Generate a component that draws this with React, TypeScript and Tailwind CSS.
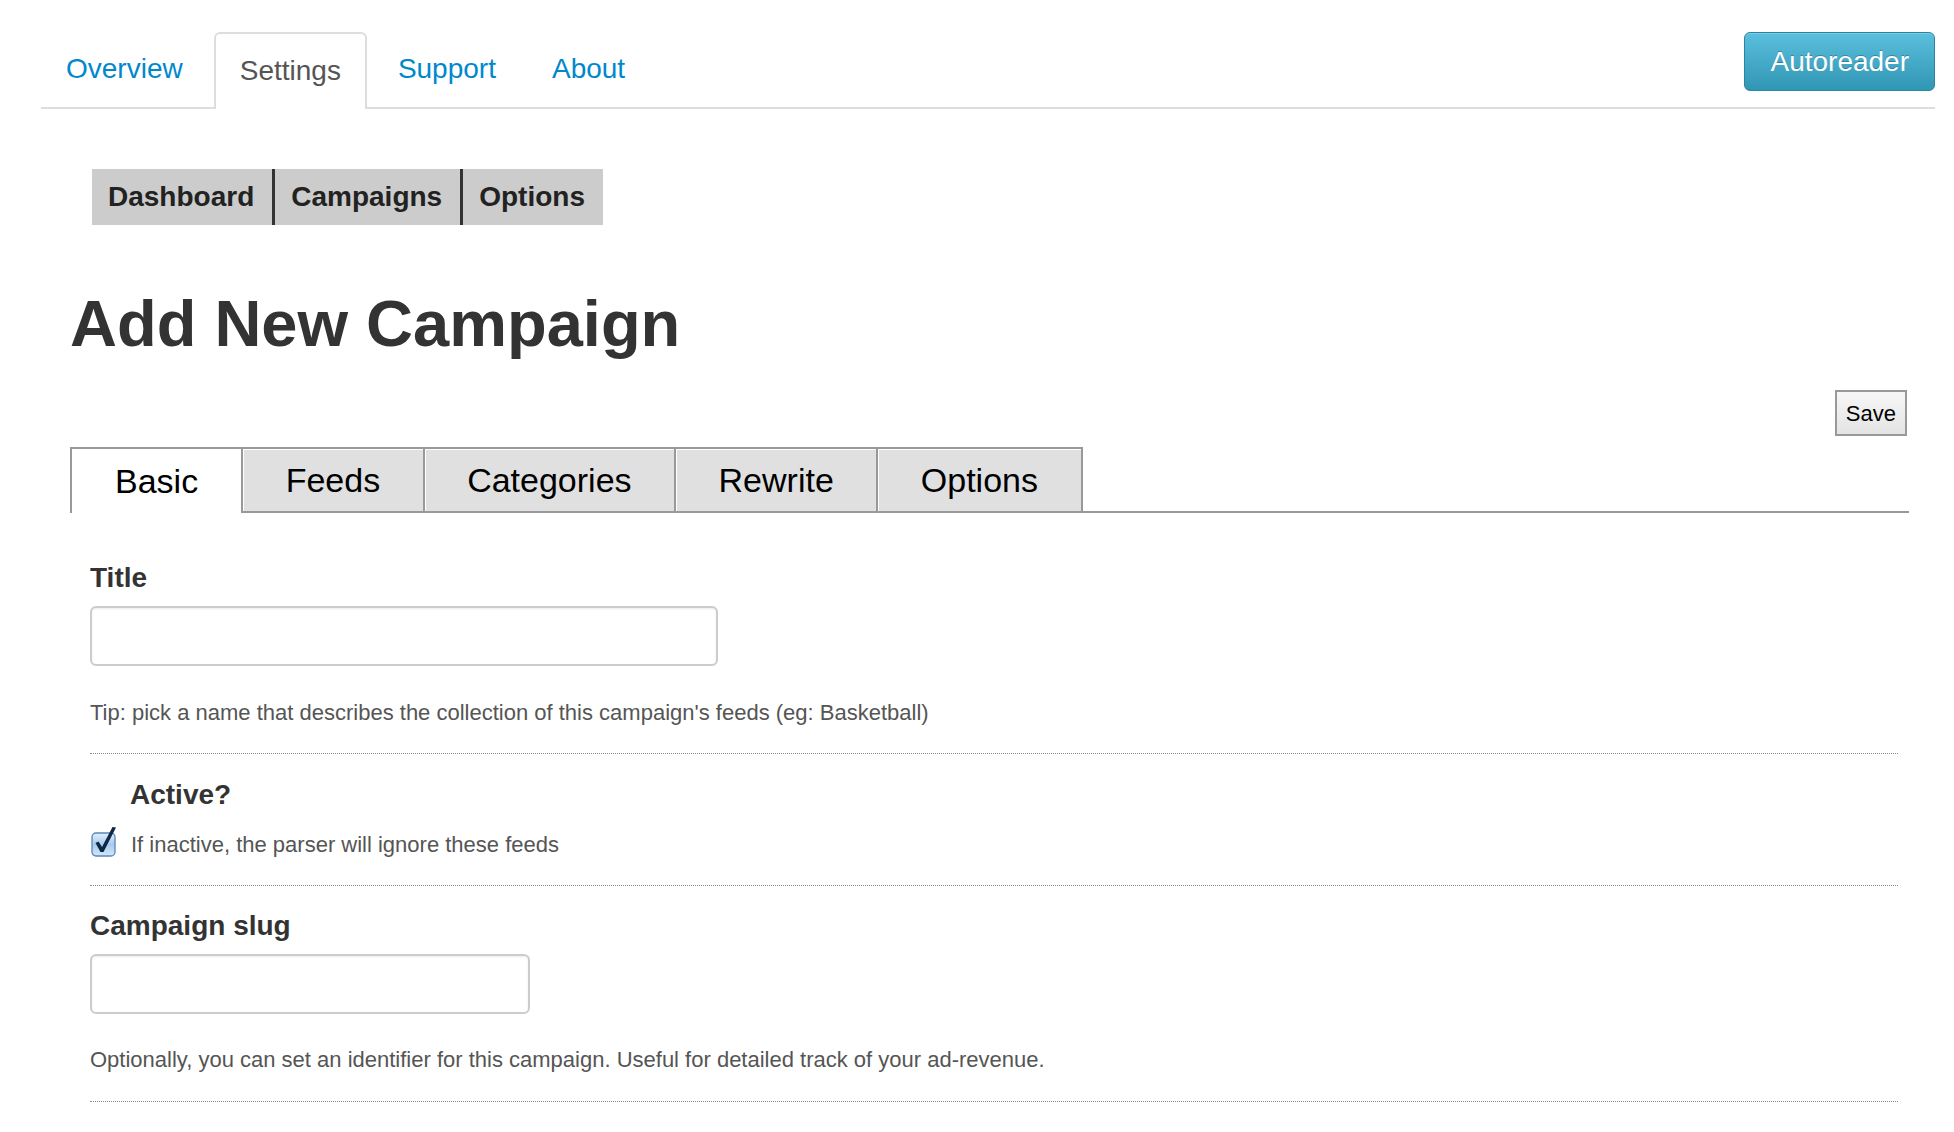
import React, { useState } from 'react';

const navItems = ['Overview', 'Settings', 'Support', 'About'];
const subNav = ['Dashboard', 'Campaigns', 'Options'];
const tabs = ['Basic', 'Feeds', 'Categories', 'Rewrite', 'Options'];

const CheckIcon: React.FC = () => (
    <svg width="28" height="32" viewBox="0 0 28 32" className="block">
        <defs>
            <linearGradient id="cb" x1="0" y1="0" x2="0" y2="1">
                <stop offset="0" stopColor="#e2effb" />
                <stop offset="0.5" stopColor="#a7cbee" />
                <stop offset="1" stopColor="#d3e7fa" />
            </linearGradient>
        </defs>
        <rect x="1" y="8" width="23" height="23" rx="4" fill="url(#cb)" stroke="#5a86b6" strokeWidth="1.3" />
        <path d="M4.5 18 L7.5 16.5 L11 22 L21.5 2 L25 2.5 L12.5 27 L9.5 27 Z" fill="#0e2747" />
    </svg>
);

const Divider: React.FC = () => <div className="border-t border-dotted border-[#888]" />;

export default function App() {
    const [active, setActive] = useState(true);

    return (
        <div className="min-h-[1132px] bg-white pt-[32px] font-['Liberation_Sans',Arial,sans-serif]">
            {/* top navigation */}
            <div className="ml-[41px] w-[1894px] flex justify-between items-start border-b-2 border-[#ddd]">
                <ul className="flex gap-[6px] self-end -mb-[2px]">
                    {navItems.map((item) => (
                        <li key={item}>
                            {item === 'Settings' ? (
                                <span className="block h-[77px] px-[24px] pt-[20px] text-[28px] leading-[34px] text-[#555] bg-white border-2 border-b-0 border-[#ddd] rounded-t-[6px]">
                                    {item}
                                </span>
                            ) : (
                                <a href="#" className="block h-[77px] px-[25px] pt-[20px] text-[28px] leading-[34px] text-[#0088cc]">
                                    {item}
                                </a>
                            )}
                        </li>
                    ))}
                </ul>
                <button className="h-[59px] px-[25px] mb-[16px] rounded-[6px] text-[28px] text-white bg-gradient-to-b from-[#5bc0de] to-[#2f96b4] border border-[#2a85a0] shadow-[inset_0_1px_0_rgba(255,255,255,0.2)] [text-shadow:0_-1px_0_rgba(0,0,0,0.25)]">
                    Autoreader
                </button>
            </div>

            <div className="ml-[70px] w-[1839px]">
                {/* sub navigation */}
                <div className="mt-[60px] ml-[22px] flex w-fit bg-[#ccc]">
                    {subNav.map((item, i) => (
                        <a
                            key={item}
                            href="#"
                            className={`h-[56px] flex items-center pl-[16px] pr-[18px] text-[28px] font-bold text-[#222] ${i > 0 ? 'border-l-[3px] border-[#333]' : ''}`}
                        >
                            {item}
                        </a>
                    ))}
                </div>

                <h1 className="mt-[66px] text-[65px] leading-none font-bold text-[#333]">Add New Campaign</h1>

                <div className="mt-[34px] flex justify-end pr-[2px]">
                    <button className="h-[46px] px-[9px] text-[22px] text-black border-2 border-[#999] bg-gradient-to-b from-[#f7f7f7] to-[#e4e4e4]">
                        Save
                    </button>
                </div>

                {/* tabs */}
                <div className="mt-[11px] flex border-b-2 border-[#999]">
                    {tabs.map((tab, i) => (
                        <div
                            key={tab}
                            className={
                                i === 0
                                    ? 'h-[66px] -mb-[2px] px-[43px] flex items-center text-[34px] text-black bg-white border-2 border-b-0 border-[#999]'
                                    : 'h-[64px] px-[42.5px] flex items-center text-[34px] text-black bg-[#e0e0e0] border-2 border-b-0 border-l-0 border-[#999] shadow-[inset_1px_1px_0_#fff]'
                            }
                        >
                            {tab}
                        </div>
                    ))}
                </div>

                {/* form */}
                <div className="pl-[20px] pr-[11px]">
                    <div className="pt-[48px]">
                        <label className="block text-[28px] leading-[34px] font-bold text-[#333]">Title</label>
                        <input className="mt-[11px] block w-[628px] h-[60px] rounded-[6px] border-2 border-[#ccc] shadow-[inset_0_1px_2px_rgba(0,0,0,0.08)] px-3 text-[20px] outline-none" />
                        <p className="mt-[33px] mb-[26px] text-[22px] leading-[28px] text-[#555]">
                            Tip: pick a name that describes the collection of this campaign's feeds (eg: Basketball)
                        </p>
                    </div>
                    <Divider />

                    <div className="pt-[24px]">
                        <label className="block pl-[40px] text-[28px] leading-[34px] font-bold text-[#333]">Active?</label>
                        <label className="mt-[19px] mb-[26px] flex items-center gap-[12px] h-[28px] cursor-pointer" onClick={() => setActive(!active)}>
                            <span className="-mt-[8px] ml-[1px]">
                                {active ? (
                                    <CheckIcon />
                                ) : (
                                    <span className="block w-[24px] h-[24px] mt-[8px] rounded-[4px] border border-[#999] bg-white" />
                                )}
                            </span>
                            <span className="text-[22px] leading-[28px] text-[#555]">If inactive, the parser will ignore these feeds</span>
                        </label>
                    </div>
                    <Divider />

                    <div className="pt-[23px]">
                        <label className="block text-[28px] leading-[34px] font-bold text-[#333]">Campaign slug</label>
                        <input className="mt-[11px] block w-[440px] h-[60px] rounded-[6px] border-2 border-[#ccc] shadow-[inset_0_1px_2px_rgba(0,0,0,0.08)] px-3 text-[20px] outline-none" />
                        <p className="mt-[32px] mb-[27px] text-[22px] leading-[28px] text-[#555]">
                            Optionally, you can set an identifier for this campaign. Useful for detailed track of your ad-revenue.
                        </p>
                    </div>
                    <Divider />
                </div>
            </div>
        </div>
    );
}
